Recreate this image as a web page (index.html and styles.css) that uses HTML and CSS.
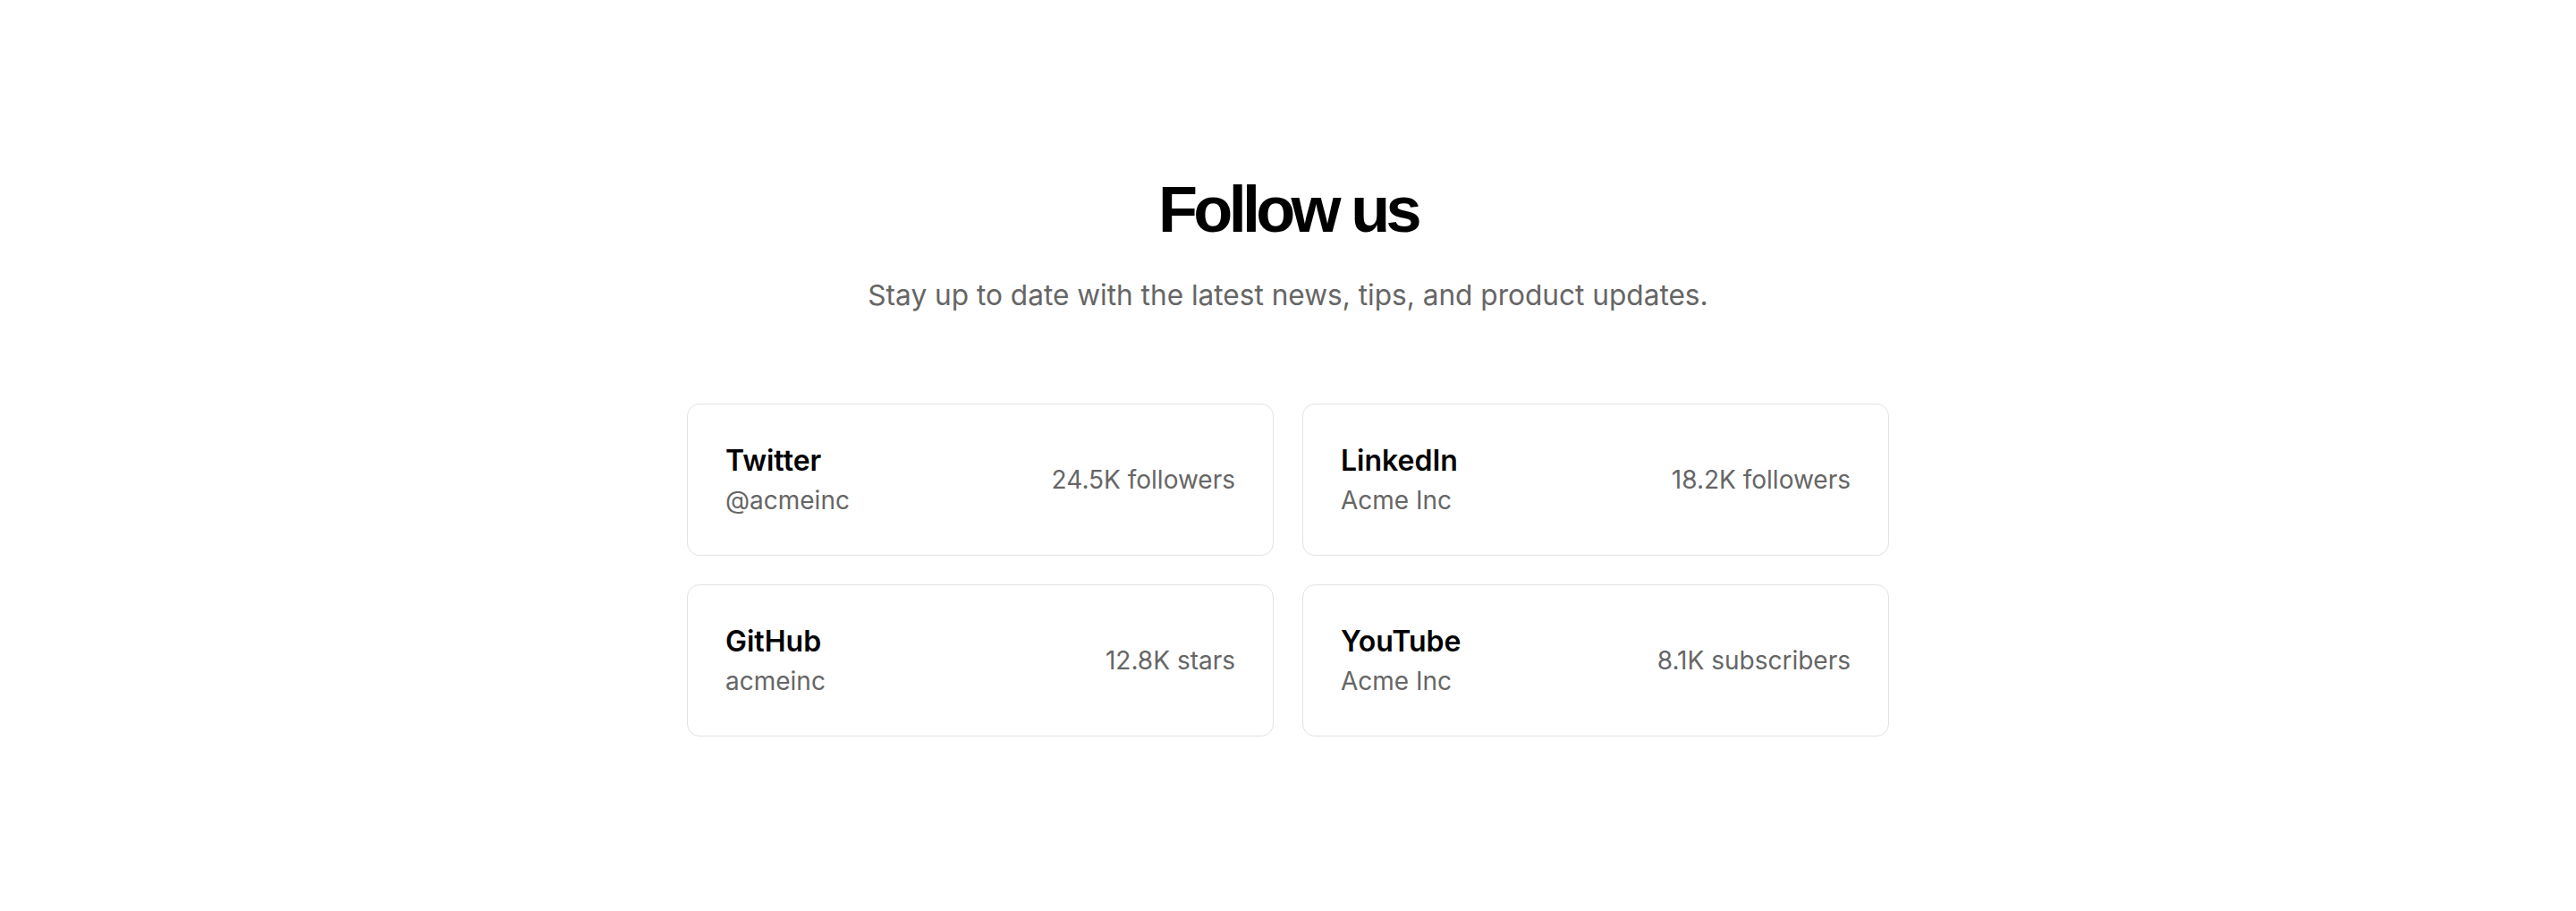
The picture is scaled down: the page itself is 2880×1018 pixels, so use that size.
FILE: index.html
```html
<!DOCTYPE html>
<html lang="en">
<head>
<meta charset="utf-8">
<title>Follow us</title>
<link rel="stylesheet" href="styles.css">
</head>
<body>
<section class="follow">
  <header class="follow-head">
    <h1 class="follow-title">Follow us</h1>
    <p class="follow-sub">Stay up to date with the latest news, tips, and product updates.</p>
  </header>
  <div class="grid">
    <a class="card" href="#">
      <div class="card-info">
        <div class="card-name">Twitter</div>
        <div class="card-handle">@acmeinc</div>
      </div>
      <div class="card-stat">24.5K followers</div>
    </a>
    <a class="card" href="#">
      <div class="card-info">
        <div class="card-name">LinkedIn</div>
        <div class="card-handle">Acme Inc</div>
      </div>
      <div class="card-stat">18.2K followers</div>
    </a>
    <a class="card" href="#">
      <div class="card-info">
        <div class="card-name">GitHub</div>
        <div class="card-handle">acmeinc</div>
      </div>
      <div class="card-stat">12.8K stars</div>
    </a>
    <a class="card" href="#">
      <div class="card-info">
        <div class="card-name">YouTube</div>
        <div class="card-handle">Acme Inc</div>
      </div>
      <div class="card-stat">8.1K subscribers</div>
    </a>
  </div>
</section>
</body>
</html>
```
FILE: styles.css
```css
* { box-sizing: border-box; }
html, body {
  margin: 0;
  padding: 0;
  background: #ffffff;
}
body {
  font-family: Inter, "Noto Sans", "Liberation Sans", sans-serif;
  color: #000;
}
.follow {
  padding-top: 198px;
  display: flex;
  flex-direction: column;
  align-items: center;
}
.follow-head {
  text-align: center;
}
.follow-title {
  margin: 0;
  font-family: "Liberation Sans", Arial, sans-serif;
  font-size: 72px;
  line-height: 72px;
  font-weight: 700;
  letter-spacing: -0.065em;
  color: #000;
}
.follow-sub {
  margin: 40px 0 0;
  font-size: 31.6px;
  line-height: 40px;
  color: #666666;
}
.grid {
  margin-top: 101px;
  width: 1344px;
  display: grid;
  grid-template-columns: 1fr 1fr;
  gap: 32px;
}
.card {
  display: flex;
  align-items: center;
  justify-content: space-between;
  padding: 43px 42px;
  border: 1px solid #e2e2e2;
  border-radius: 14px;
  background: #fff;
  text-decoration: none;
  color: inherit;
}
.card-name {
  font-size: 32px;
  line-height: 40px;
  font-weight: 600;
  color: #000;
}
.card-handle {
  margin-top: 6px;
  font-size: 28px;
  line-height: 36px;
  color: #666666;
}
.card-stat {
  font-size: 28px;
  line-height: 36px;
  color: #666666;
}
```
